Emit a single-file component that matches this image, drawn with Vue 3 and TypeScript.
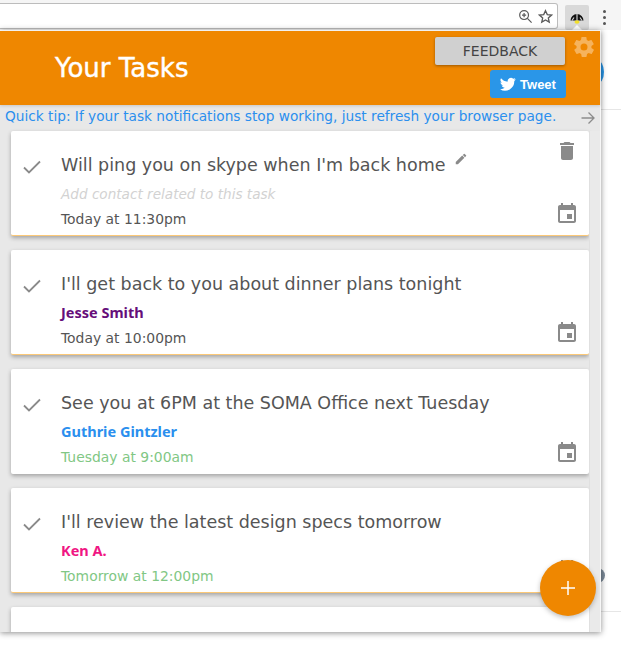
<script setup lang="ts">
import { ref } from 'vue';

interface Task {
  title: string;
  contact: string;
  contactColor: string;
  time: string;
  soon: boolean;
  highlight: boolean;
  editable: boolean;
}

const tasks = ref<Task[]>([
  { title: "Will ping you on skype when I'm back home", contact: '', contactColor: '', time: 'Today at 11:30pm', soon: false, highlight: true, editable: true },
  { title: "I'll get back to you about dinner plans tonight", contact: 'Jesse Smith', contactColor: '#660e7a', time: 'Today at 10:00pm', soon: false, highlight: true, editable: false },
  { title: 'See you at 6PM at the SOMA Office next Tuesday', contact: 'Guthrie Gintzler', contactColor: '#2b8fee', time: 'Tuesday at 9:00am', soon: true, highlight: false, editable: false },
  { title: "I'll review the latest design specs tomorrow", contact: 'Ken A.', contactColor: '#f01683', time: 'Tomorrow at 12:00pm', soon: true, highlight: true, editable: false },
]);
</script>

<template>
  <div class="page">
    <div class="toolbar">
      <div class="omnibox">
        <svg class="tool-icon" viewBox="0 0 16 16" width="15" height="15">
          <circle cx="6.5" cy="6.5" r="4.7" fill="none" stroke="#5a5a5a" stroke-width="1.300" />
          <path d="M10 10l4.500 4.500M4.300 6.500h4.400M6.500 4.300v4.400" stroke="#5a5a5a" stroke-width="1.300" fill="none" />
        </svg>
        <svg class="tool-icon" viewBox="0 0 16 16" width="15" height="15">
          <path d="M8 1.800l1.900 4.200 4.500.5-3.400 3 1 4.500L8 11.700 4 14l1-4.500-3.400-3 4.500-.5z" fill="none" stroke="#5a5a5a" stroke-width="1.400" />
        </svg>
      </div>
      <div class="ext">
        <svg viewBox="0 0 16 14" width="16" height="14">
          <path d="M1.500 9.500a6.500 6.500 0 0 1 13 0z" fill="#111" />
          <path d="M8 2.500v7M3 9.500l2-3M13 9.500l-2-3" stroke="#cfcfcf" stroke-width="1.200" />
          <ellipse cx="8" cy="11" rx="2.500" ry="1.800" fill="#f2e02c" />
        </svg>
      </div>
      <div class="dots"><i></i><i></i><i></i></div>
    </div>

    <div class="backdrop">
      <div class="peek"></div>
      <span class="peek-blue"></span>
      <span class="peek-grey"></span>
    </div>

    <div class="popup">
      <header class="header">
        <h1 class="heading">Your Tasks</h1>
        <div class="actions">
          <button class="feedback">FEEDBACK</button>
          <button class="tweet">
            <svg viewBox="0 0 24 24" width="16" height="16">
              <path fill="#fff" d="M23.600 4.900c-.9.400-1.800.6-2.800.8 1-.6 1.800-1.500 2.100-2.700-.9.600-2 1-3.100 1.200a4.900 4.900 0 0 0-8.300 4.400C7.500 8.400 3.900 6.500 1.500 3.500a4.900 4.900 0 0 0 1.500 6.500c-.8 0-1.500-.2-2.200-.6v.1c0 2.400 1.700 4.400 3.900 4.800-.7.200-1.500.2-2.200.1.600 1.900 2.400 3.300 4.600 3.400A9.900 9.900 0 0 1 0 19.800a13.900 13.900 0 0 0 21.400-12.400c1-.7 1.800-1.500 2.200-2.500z" />
            </svg>
            <span>Tweet</span>
          </button>
        </div>
        <svg class="gear" viewBox="0 0 24 24" width="24" height="24">
          <path fill="#f6b35c" d="M19.400 13c0-.3.100-.6.100-1s0-.7-.1-1l2.100-1.600c.2-.2.200-.4.100-.6l-2-3.500c-.1-.2-.4-.3-.6-.2l-2.500 1c-.5-.4-1.100-.7-1.700-1l-.4-2.600c0-.3-.2-.4-.5-.4h-4c-.2 0-.4.100-.5.400l-.4 2.600c-.6.300-1.200.6-1.700 1l-2.500-1c-.2-.1-.5 0-.6.200l-2 3.500c-.1.200-.1.500.1.600L4.600 11c0 .3-.1.700-.1 1s0 .7.1 1l-2.100 1.600c-.2.200-.2.400-.1.600l2 3.500c.1.200.4.300.6.200l2.500-1c.5.400 1.100.7 1.700 1l.4 2.600c0 .3.300.4.500.4h4c.3 0 .5-.1.500-.4l.4-2.600c.6-.3 1.200-.6 1.700-1l2.500 1c.2.100.5 0 .6-.2l2-3.500c.1-.2.100-.5-.1-.6zM12 15.500a3.500 3.500 0 1 1 0-7 3.500 3.500 0 0 1 0 7z" />
        </svg>
      </header>

      <div class="body">
        <div class="tip-row">
          <span class="tip">Quick tip: If your task notifications stop working, just refresh your browser page.</span>
          <svg class="next" viewBox="0 0 16 16" width="16" height="16">
            <path d="M1.500 8h12.500M8.500 2.500L14 8l-5.500 5.500" fill="none" stroke="#8c8c8c" stroke-width="1.300" />
          </svg>
        </div>

        <div class="list">
          <article v-for="task in tasks" :key="task.title" class="card" :class="{ highlight: task.highlight }">
            <svg class="check" viewBox="0 0 18 14" width="18" height="14">
              <path d="M1 7.500l5 5L17 1.500" fill="none" stroke="#8a8a8a" stroke-width="1.800" />
            </svg>
            <div class="content">
              <div class="title">
                {{ task.title }}
                <svg v-if="task.editable" class="pencil" viewBox="0 0 24 24" width="14" height="14">
                  <path fill="#8a8a8a" d="M3 17.250V21h3.750L17.810 9.940l-3.750-3.750zM20.710 7.040a1 1 0 0 0 0-1.410l-2.340-2.340a1 1 0 0 0-1.410 0l-1.830 1.830 3.750 3.750z" />
                </svg>
              </div>
              <div v-if="task.contact" class="contact" :style="{ color: task.contactColor }">{{ task.contact }}</div>
              <div v-else class="contact empty">Add contact related to this task</div>
              <div class="time" :class="{ soon: task.soon }">{{ task.time }}</div>
            </div>
            <div class="side">
              <svg v-if="task.editable" class="trash" viewBox="0 0 24 24" width="24" height="24">
                <path fill="#8a8a8a" d="M6 19c0 1.100.9 2 2 2h8c1.100 0 2-.9 2-2V7H6zM19 4h-3.500l-1-1h-5l-1 1H5v2h14z" />
              </svg>
              <svg class="cal" viewBox="0 0 24 24" width="24" height="24">
                <path fill="#8a8a8a" d="M17 12h-5v5h5zM16 1v2H8V1H6v2H5C3.900 3 3 3.900 3 5v14c0 1.100.9 2 2 2h14c1.100 0 2-.9 2-2V5c0-1.100-.9-2-2-2h-1V1zm3 18H5V8h14z" />
              </svg>
            </div>
          </article>
          <article class="card stub"></article>
        </div>

        <div class="scroll-track"></div>
      </div>

      <button class="fab">
        <svg viewBox="0 0 14 14" width="14" height="14">
          <path d="M7 0v14M0 7h14" stroke="#fff" stroke-width="1.500" />
        </svg>
      </button>
    </div>
  </div>
</template>

<style scoped>
.page {
  position: relative;
  width: 621px;
  height: 645px;
  overflow: hidden;
  background: #fff;
  font-family: "DejaVu Sans", "Open Sans", sans-serif;
}

.toolbar {
  display: flex;
  align-items: flex-start;
  height: 30px;
  background: #f5f5f5;
}

.omnibox {
  display: flex;
  align-items: center;
  justify-content: flex-end;
  gap: 5px;
  width: 558px;
  height: 26px;
  margin-top: 3px;
  padding-right: 4px;
  box-sizing: border-box;
  background: #fff;
  border: 1px solid #bcbcbc;
  border-left: none;
  border-radius: 0 3px 3px 0;
}

.tool-icon {
  display: block;
}

.ext {
  position: relative;
  display: flex;
  justify-content: center;
  width: 24px;
  height: 25px;
  margin: 5px 0 0 7px;
  padding-top: 6px;
  box-sizing: border-box;
  background: #d9d9d9;
  border-radius: 2px;
}

.ext::after {
  content: "";
  position: absolute;
  bottom: 0;
  left: 7px;
  border: 5px solid transparent;
  border-top: none;
  border-bottom-color: #fff;
}

.dots {
  display: flex;
  flex-direction: column;
  gap: 3px;
  margin: 10px 0 0 14px;
}

.dots i {
  display: block;
  width: 3px;
  height: 3px;
  border-radius: 50%;
  background: #555;
}

.backdrop {
  position: absolute;
  top: 30px;
  left: 0;
  right: 0;
  height: 581px;
  border-bottom: 1px solid #e6e6e6;
}

.peek {
  position: absolute;
  top: 79px;
  left: 0;
  right: 0;
  border-top: 1px solid #e6e6e6;
}

.peek-blue {
  position: absolute;
  top: 30px;
  left: 590px;
  width: 14px;
  height: 24px;
  border-radius: 50%;
  background: #2a96e8;
}

.peek-grey {
  position: absolute;
  top: 538px;
  left: 590px;
  width: 15px;
  height: 15px;
  border-radius: 50%;
  background: #7c8a99;
}

.popup {
  position: absolute;
  top: 30px;
  left: 0;
  width: 601px;
  height: 602px;
  box-sizing: border-box;
  display: flex;
  flex-direction: column;
  padding: 1px 1px 0 0;
  background: #f7f7f7;
  box-shadow: 0 1px 6px rgba(0, 0, 0, 0.45);
}

.header {
  position: relative;
  flex: none;
  display: flex;
  align-items: center;
  height: 74px;
  padding-left: 55px;
  background: #ef8700;
  z-index: 1;
  box-shadow: 0 1px 3px rgba(0, 0, 0, 0.15);
}

.heading {
  margin: 0;
  color: #fff;
  font-size: 26px;
  font-weight: 400;
  -webkit-text-stroke: 0.4px #fff;
}

.actions {
  position: absolute;
  top: 6px;
  right: 35px;
  display: flex;
  flex-direction: column;
  align-items: flex-end;
  gap: 5px;
}

.feedback {
  width: 130px;
  height: 28px;
  border: none;
  border-radius: 2px;
  background: #d0d0d0;
  color: #444;
  font-family: inherit;
  font-size: 14px;
  box-shadow: 0 1px 3px rgba(0, 0, 0, 0.35);
}

.tweet {
  display: flex;
  align-items: center;
  justify-content: center;
  gap: 4px;
  width: 76px;
  height: 28px;
  margin-right: -1px;
  padding: 0;
  border: none;
  border-radius: 3px;
  background: #2a96e8;
  color: #fff;
  font-family: "Liberation Sans", sans-serif;
  font-size: 13px;
  font-weight: 700;
}

.gear {
  position: absolute;
  top: 4px;
  right: 4px;
}

.body {
  position: relative;
  flex: 1;
  min-height: 0;
  overflow: hidden;
  padding-right: 11px;
  background: #e8e8e8;
}

.tip-row {
  display: flex;
  align-items: flex-start;
  height: 26px;
  padding-left: 5px;
}

.tip {
  margin-top: 2px;
  color: #2b8fee;
  font-size: 13.7px;
  line-height: 18px;
  white-space: nowrap;
}

.next {
  position: absolute;
  top: 5px;
  right: 4px;
}

.list {
  display: flex;
  flex-direction: column;
  gap: 14px;
  padding-left: 11px;
}

.card {
  position: relative;
  flex: none;
  display: flex;
  box-sizing: border-box;
  height: 105px;
  background: #fff;
  border-radius: 2px;
  box-shadow: 0 2px 4px rgba(0, 0, 0, 0.3);
}

.card.highlight {
  border-bottom: 1px solid #fbc877;
}

.check {
  flex: none;
  margin: 29px 0 0 12px;
}

.content {
  flex: 1;
  padding: 22px 0 0 20px;
  min-width: 0;
}

.title {
  display: flex;
  align-items: flex-start;
  height: 25px;
  color: #555;
  font-size: 17.5px;
  line-height: 25px;
  white-space: nowrap;
}

.pencil {
  margin: -1px 0 0 9px;
}

.contact {
  margin-top: 6px;
  height: 18px;
  font-family: "Noto Sans", sans-serif;
  font-size: 14.5px;
  font-weight: 700;
  line-height: 18px;
}

.contact.empty {
  margin-top: 7px;
  height: 17px;
  color: #d2d2d2;
  font-family: inherit;
  font-size: 13.6px;
  font-style: italic;
  font-weight: 400;
}

.time {
  margin-top: 8px;
  color: #555;
  font-size: 13.9px;
  line-height: 18px;
}

.time.soon {
  color: #81c784;
}

.side {
  flex: none;
  position: relative;
  width: 44px;
}

.trash {
  position: absolute;
  top: 8px;
  right: 10px;
}

.cal {
  position: absolute;
  bottom: 9px;
  right: 10px;
}

.stub {
  height: 40px;
}

.scroll-track {
  position: absolute;
  top: 26px;
  bottom: 0;
  right: 0;
  width: 11px;
  background: #eaeaea;
  border-left: 1px solid #e0e0e0;
  box-sizing: border-box;
}

.fab {
  position: absolute;
  top: 530px;
  left: 540px;
  display: flex;
  align-items: center;
  justify-content: center;
  width: 56px;
  height: 56px;
  padding: 0;
  border: none;
  border-radius: 50%;
  background: #ef8700;
  box-shadow: 0 2px 5px rgba(0, 0, 0, 0.25);
  z-index: 2;
}
</style>
